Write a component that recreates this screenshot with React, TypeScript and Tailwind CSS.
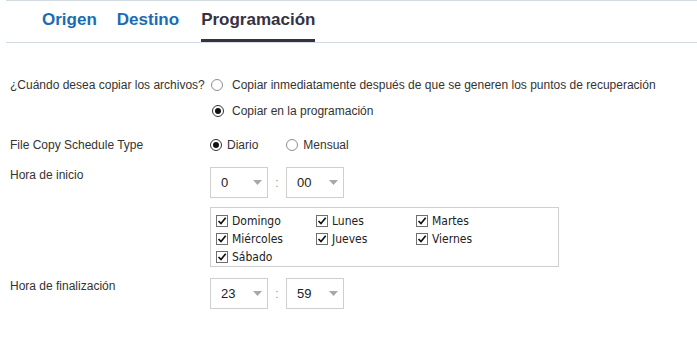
import React from "react";

const days = ["Domingo", "Lunes", "Martes", "Miércoles", "Jueves", "Viernes", "Sábado"];

function Radio({ checked }: { checked?: boolean }) {
  return (
    <span
      className={`inline-flex items-center justify-center w-[12px] h-[12px] rounded-full border bg-white shrink-0 ${
        checked ? "border-[#333]" : "border-[#8f8f8f]"
      }`}
    >
      {checked && <span className="w-[6px] h-[6px] rounded-full bg-[#111]" />}
    </span>
  );
}

function Check() {
  return (
    <span className="inline-flex items-center justify-center w-[12px] h-[12px] border border-[#6f6f6f] bg-white shrink-0">
      <svg width="10" height="10" viewBox="0 0 10 10">
        <path d="M1.5 5 L4 7.5 L8.7 1.8" fill="none" stroke="#111" strokeWidth="1.7" />
      </svg>
    </span>
  );
}

function Select({ value }: { value: string }) {
  return (
    <div className="w-[58px] h-[31px] border border-[#cfcfcf] bg-white flex items-center justify-between pl-[10px] pr-[5px] text-[13px] text-[#222]">
      <span>{value}</span>
      <svg width="9" height="5" viewBox="0 0 9 5">
        <path d="M0 0 H9 L4.5 5 Z" fill="#a8a8a8" />
      </svg>
    </div>
  );
}

function TimePair({ h, m }: { h: string; m: string }) {
  return (
    <div className="flex items-center">
      <Select value={h} />
      <span className="w-[18px] text-center text-[#9a9a9a] text-[12px]">:</span>
      <Select value={m} />
    </div>
  );
}

export default function App() {
  return (
    <div className="w-[697px] h-[338px] bg-white text-[12px] text-[#333] font-['Liberation_Sans',Arial,sans-serif]">
      {/* tabs */}
      <div className="ml-[6px] h-[43px] border-t border-b border-[#d2dae2] flex pl-[36px] gap-[20px] text-[17px] font-bold">
        <div className="h-full flex items-center pb-[3px] text-[#1b6cb4]">Origen</div>
        <div className="h-full flex items-center pb-[3px] text-[#1b6cb4]">Destino</div>
        <div className="ml-[2px] h-full flex items-center border-b-[3px] border-[#36323f] text-[#36323f]">Programación</div>
      </div>

      <div className="mt-[29px]">
        <div className="flex">
          <div className="w-[210px] pl-[10px] leading-[26px]">¿Cuándo desea copiar los archivos?</div>
          <div className="flex flex-col">
            <div className="h-[26px] flex items-center pl-[1px]">
              <Radio />
              <span className="ml-[9px]">Copiar inmediatamente después de que se generen los puntos de recuperación</span>
            </div>
            <div className="h-[26px] flex items-center pl-[2px]">
              <Radio checked />
              <span className="ml-[8px]">Copiar en la programación</span>
            </div>
          </div>
        </div>

        <div className="flex mt-[8px]">
          <div className="w-[210px] pl-[10px] leading-[26px]">File Copy Schedule Type</div>
          <div className="h-[26px] flex items-center">
            <Radio checked />
            <span className="ml-[5px]">Diario</span>
            <span className="ml-[28px] flex">
              <Radio />
            </span>
            <span className="ml-[5px]">Mensual</span>
          </div>
        </div>

        <div className="flex mt-[9px]">
          <div className="w-[210px] pl-[10px] leading-[16px]">Hora de inicio</div>
          <TimePair h="0" m="00" />
        </div>

        <div className="ml-[210px] mt-[9px] w-[349px] border border-[#cfcfcf] pt-[4px] pl-[5px] grid grid-cols-[100px_100px_100px] font-['DejaVu_Sans_Condensed','DejaVu_Sans',sans-serif] text-[12px] text-[#222]">
          {days.map((d) => (
            <div key={d} className="h-[18px] flex items-center gap-[4px]">
              <Check />
              <span>{d}</span>
            </div>
          ))}
        </div>

        <div className="flex mt-[11px]">
          <div className="w-[210px] pl-[10px] leading-[16px]">Hora de finalización</div>
          <TimePair h="23" m="59" />
        </div>
      </div>
    </div>
  );
}
